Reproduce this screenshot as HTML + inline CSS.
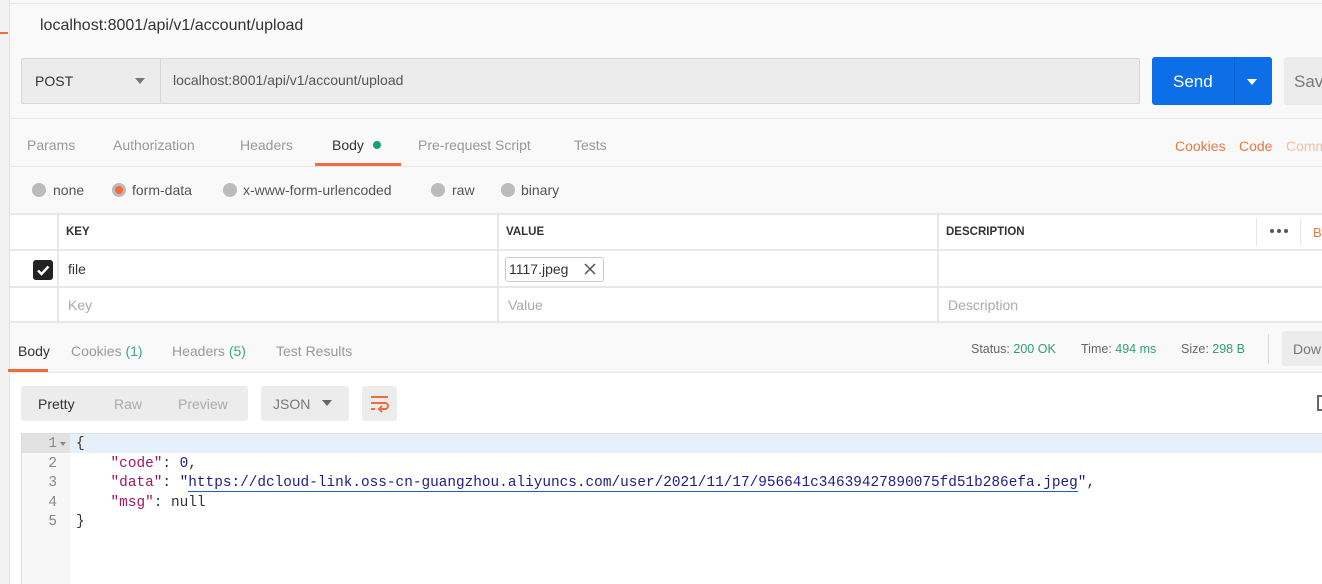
<!DOCTYPE html>
<html><head><meta charset="utf-8"><style>
*{margin:0;padding:0;box-sizing:border-box}
body{width:1322px;height:584px;overflow:hidden;background:#f9f9f9;font-family:"Liberation Sans",sans-serif;color:#333;position:relative}
.a{position:absolute}
.t{font-size:14px;color:#999}
.mono{font-family:"Liberation Mono",monospace;font-size:14.4px}
</style></head><body>
<div class="a" style="left:0;top:0;width:10px;height:584px;background:#f2f2f2;border-right:1px solid #e2e2e2"></div>
<div class="a" style="left:0;top:32px;width:8px;height:2px;background:#f26b3a"></div>
<div class="a" style="left:10px;top:0;width:1312px;height:4px;border-bottom:1px solid #e6e6e6"></div>
<div class="a" style="left:40px;top:17px;font-size:16px;color:#333">localhost:8001/api/v1/account/upload</div>

<div class="a" style="left:21px;top:58px;width:1119px;height:46px;background:#ececec;border:1px solid #d8d8d8;border-radius:2px"></div>
<div class="a" style="left:160px;top:58px;width:1px;height:46px;background:#d8d8d8"></div>
<div class="a" style="left:35px;top:73px;font-size:14px;color:#333">POST</div>
<div class="a" style="left:135px;top:78px;width:0;height:0;border-left:5px solid transparent;border-right:5px solid transparent;border-top:6px solid #777"></div>
<div class="a" style="left:173px;top:72px;font-size:14px;color:#555">localhost:8001/api/v1/account/upload</div>
<div class="a" style="left:1152px;top:57px;width:120px;height:48px;background:#0c6fe8;border-radius:3px"></div>
<div class="a" style="left:1234px;top:57px;width:1px;height:48px;background:#0a5fcc"></div>
<div class="a" style="left:1173px;top:72px;font-size:17px;color:#fff">Send</div>
<div class="a" style="left:1247px;top:79px;width:0;height:0;border-left:5px solid transparent;border-right:5px solid transparent;border-top:6px solid #fff"></div>
<div class="a" style="left:1284px;top:57px;width:50px;height:48px;background:#ececec;border-radius:3px"></div>
<div class="a" style="left:1294px;top:72px;font-size:17px;color:#777">Sav</div>
<div class="a" style="left:10px;top:118px;width:1312px;height:1px;background:#e6e6e6"></div>

<div class="a t" style="left:27px;top:137px">Params</div>
<div class="a t" style="left:113px;top:137px">Authorization</div>
<div class="a t" style="left:240px;top:137px">Headers</div>
<div class="a" style="left:332px;top:137px;font-size:14px;color:#333">Body</div>
<div class="a" style="left:373px;top:141px;width:8px;height:8px;border-radius:50%;background:#1a9e79"></div>
<div class="a t" style="left:418px;top:137px">Pre-request Script</div>
<div class="a t" style="left:574px;top:137px">Tests</div>
<div class="a" style="left:315px;top:163px;width:86px;height:3px;background:#f26b3a"></div>
<div class="a" style="left:1175px;top:138px;font-size:14px;color:#e07b4a">Cookies</div>
<div class="a" style="left:1239px;top:138px;font-size:14px;color:#e07b4a">Code</div>
<div class="a" style="left:1286px;top:138px;font-size:14px;color:#f2bfa3">Comm</div>
<div class="a" style="left:10px;top:166px;width:1312px;height:1px;background:#e6e6e6"></div>

<div class="a" style="left:32px;top:183px;width:14px;height:14px;border-radius:50%;background:#bbb"></div>
<div class="a t" style="left:53px;top:182px;color:#555">none</div>
<div class="a" style="left:112px;top:183px;width:14px;height:14px;border-radius:50%;background:#bbb"></div>
<div class="a" style="left:115px;top:186px;width:8px;height:8px;border-radius:50%;background:#f26b3a"></div>
<div class="a t" style="left:132px;top:182px;color:#555">form-data</div>
<div class="a" style="left:223px;top:183px;width:14px;height:14px;border-radius:50%;background:#bbb"></div>
<div class="a t" style="left:243px;top:182px;color:#555">x-www-form-urlencoded</div>
<div class="a" style="left:431px;top:183px;width:14px;height:14px;border-radius:50%;background:#bbb"></div>
<div class="a t" style="left:452px;top:182px;color:#555">raw</div>
<div class="a" style="left:501px;top:183px;width:14px;height:14px;border-radius:50%;background:#bbb"></div>
<div class="a t" style="left:521px;top:182px;color:#555">binary</div>

<div class="a" style="left:10px;top:213px;width:1312px;height:110px;background:#fff;border-top:2px solid #e8e8e8;border-bottom:2px solid #e8e8e8"></div>
<div class="a" style="left:10px;top:249px;width:1312px;height:2px;background:#e8e8e8"></div>
<div class="a" style="left:10px;top:286px;width:1312px;height:2px;background:#e8e8e8"></div>
<div class="a" style="left:57px;top:213px;width:2px;height:110px;background:#e8e8e8"></div>
<div class="a" style="left:497px;top:213px;width:2px;height:110px;background:#e8e8e8"></div>
<div class="a" style="left:937px;top:213px;width:2px;height:110px;background:#e8e8e8"></div>
<div class="a" style="left:1256px;top:218px;width:1px;height:28px;background:#e8e8e8"></div>
<div class="a" style="left:1300px;top:218px;width:1px;height:28px;background:#e8e8e8"></div>
<div class="a" style="left:66px;top:226px;font-size:11.5px;font-weight:bold;color:#333">KEY</div>
<div class="a" style="left:506px;top:226px;font-size:11.5px;font-weight:bold;color:#333">VALUE</div>
<div class="a" style="left:946px;top:226px;font-size:11.5px;font-weight:bold;color:#333">DESCRIPTION</div>
<div class="a" style="left:1270px;top:229px;width:4px;height:4px;border-radius:50%;background:#555"></div>
<div class="a" style="left:1277px;top:229px;width:4px;height:4px;border-radius:50%;background:#555"></div>
<div class="a" style="left:1284px;top:229px;width:4px;height:4px;border-radius:50%;background:#555"></div>
<div class="a" style="left:1313px;top:225px;font-size:13px;color:#e07b4a">B</div>
<div class="a" style="left:33px;top:260px;width:20px;height:20px;background:#222;border-radius:3px"></div>
<svg class="a" style="left:33px;top:260px" width="20" height="20"><path d="M5 10.5l3.5 3.5L15.5 6.5" stroke="#fff" stroke-width="2.4" fill="none"/></svg>
<div class="a" style="left:68px;top:261px;font-size:14px;color:#333">file</div>
<div class="a" style="left:505px;top:257px;width:99px;height:25px;border:1px solid #ccc;border-radius:3px;background:#fff"></div>
<div class="a" style="left:509px;top:261px;font-size:14px;color:#333">1117.jpeg</div>
<svg class="a" style="left:584px;top:263px" width="12" height="12"><path d="M1 1L11 11M11 1L1 11" stroke="#555" stroke-width="1.5"/></svg>
<div class="a t" style="left:68px;top:297px;color:#aaa">Key</div>
<div class="a t" style="left:508px;top:297px;color:#aaa">Value</div>
<div class="a t" style="left:948px;top:297px;color:#aaa">Description</div>

<div class="a" style="left:18px;top:343px;font-size:14px;color:#333">Body</div>
<div class="a t" style="left:71px;top:343px">Cookies <span style="color:#3fa58a">(1)</span></div>
<div class="a t" style="left:172px;top:343px">Headers <span style="color:#3fa58a">(5)</span></div>
<div class="a t" style="left:276px;top:343px">Test Results</div>
<div class="a" style="left:8px;top:369px;width:40px;height:3px;background:#f26b3a"></div>
<div class="a" style="left:10px;top:372px;width:1312px;height:1px;background:#e6e6e6"></div>
<div class="a" style="left:971px;top:342px;font-size:12.5px;color:#666">Status: <span style="color:#2e9e7a">200 OK</span></div>
<div class="a" style="left:1081px;top:342px;font-size:12.5px;color:#666">Time: <span style="color:#2e9e7a">494 ms</span></div>
<div class="a" style="left:1181px;top:342px;font-size:12.5px;color:#666">Size: <span style="color:#2e9e7a">298 B</span></div>
<div class="a" style="left:1268px;top:334px;width:1px;height:30px;background:#ddd"></div>
<div class="a" style="left:1282px;top:331px;width:50px;height:35px;background:#ececec;border-radius:3px"></div>
<div class="a" style="left:1293px;top:341px;font-size:14px;color:#777">Dow</div>

<div class="a" style="left:10px;top:373px;width:1312px;height:211px;background:#fff"></div>
<div class="a" style="left:21px;top:386px;width:227px;height:35px;background:#ececec;border-radius:3px"></div>
<div class="a" style="left:38px;top:396px;font-size:14px;color:#333">Pretty</div>
<div class="a t" style="left:114px;top:396px;color:#aaa">Raw</div>
<div class="a t" style="left:178px;top:396px;color:#aaa">Preview</div>
<div class="a" style="left:261px;top:386px;width:88px;height:35px;background:#ececec;border-radius:3px"></div>
<div class="a t" style="left:273px;top:396px;color:#777">JSON</div>
<div class="a" style="left:322px;top:400px;width:0;height:0;border-left:5px solid transparent;border-right:5px solid transparent;border-top:6px solid #666"></div>
<div class="a" style="left:362px;top:386px;width:35px;height:35px;background:#ececec;border-radius:3px"></div>
<svg class="a" style="left:369px;top:393px" width="22" height="22"><path d="M2 4H19M2 10H16a3 3 0 0 1 0 6H10M13 13l-3 3 3 3M2 16H6" stroke="#f26b3a" stroke-width="2" fill="none"/></svg>
<div class="a" style="left:1317px;top:395px;width:5px;height:16px;border:2px solid #666;border-right:none"></div>

<div class="a" style="left:21px;top:433px;width:1301px;height:151px;border-top:1px solid #ddd;border-left:1px solid #ddd"></div>
<div class="a" style="left:22px;top:434px;width:48px;height:150px;background:#f7f7f7"></div>
<div class="a" style="left:22px;top:434px;width:48px;height:19px;background:#e2e2e2"></div>
<div class="a" style="left:70px;top:434px;width:1252px;height:19px;background:#e6f0fb"></div>
<div class="a mono" style="left:22px;top:435px;width:35px;line-height:19.5px;text-align:right;color:#888">1<br>2<br>3<br>4<br>5</div>
<div class="a" style="left:60px;top:442px;width:0;height:0;border-left:3px solid transparent;border-right:3px solid transparent;border-top:4px solid #888"></div>
<pre class="a mono" style="left:76px;top:435px;line-height:19.5px;color:#333">{
    <span style="color:#a31563">"code"</span>: <span style="color:#1d1d8a">0</span>,
    <span style="color:#a31563">"data"</span>: <span style="color:#1d1d8a">"<span style="border-bottom:1px solid #1a5fc8">https://dcloud-link.oss-cn-guangzhou.aliyuncs.com/user/2021/11/17/956641c34639427890075fd51b286efa.jpeg</span>"</span>,
    <span style="color:#a31563">"msg"</span>: <span style="color:#333">null</span>
}</pre>
</body></html>
